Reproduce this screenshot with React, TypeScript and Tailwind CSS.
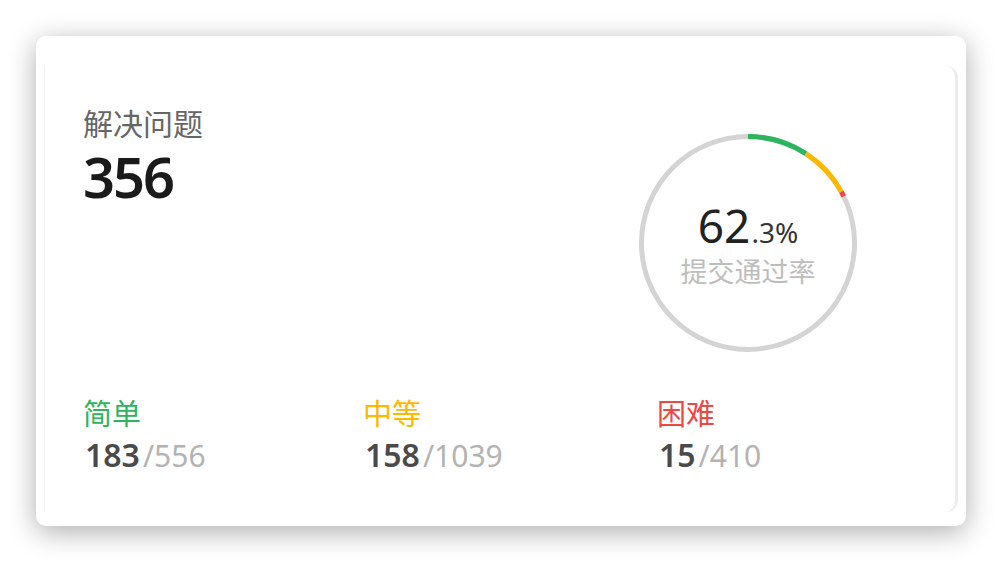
import React from "react";

const stats = [
  { label: "简单", solved: 183, total: 556, color: "#2db55d", labelClass: "text-[#2db55d]" },
  { label: "中等", solved: 158, total: 1039, color: "#ffb800", labelClass: "text-[#ffb800]" },
  { label: "困难", solved: 15, total: 410, color: "#ef4743", labelClass: "text-[#ef4743]" },
];

const RING_R = 106.5;
const CIRC = 2 * Math.PI * RING_R;

const ProgressRing = () => {
  const sum = stats.reduce((a, s) => a + s.total, 0);
  let offset = 0;
  return (
    <div className="relative w-[222px] h-[222px]">
      <svg width="222" height="222" viewBox="0 0 222 222" className="-rotate-90">
        <circle cx="111" cy="111" r={RING_R} fill="none" stroke="#d4d4d4" strokeWidth="5" />
        {stats.map((s) => {
          const len = (s.solved / sum) * CIRC;
          const el = (
            <circle
              key={s.label}
              cx="111"
              cy="111"
              r={RING_R}
              fill="none"
              stroke={s.color}
              strokeWidth="5"
              strokeDasharray={`${len} ${CIRC - len}`}
              strokeDashoffset={-offset}
            />
          );
          offset += len;
          return el;
        })}
      </svg>
      <div className="absolute inset-0 flex flex-col items-center pt-[70px]">
        <div className="leading-none text-[#222]">
          <span className="text-[46px]">62</span>
          <span className="ml-[1px] text-[28px] text-[#333]">.3%</span>
        </div>
        <div className="mt-[10px] text-[27px] leading-none text-[#bdbdbd]">提交通过率</div>
      </div>
    </div>
  );
};

export default function App() {
  return (
    <div className="w-full h-[562px] bg-white pt-[36px] pl-[36px] font-['Noto_Sans','Noto_Sans_CJK_SC',sans-serif]">
      <div className="w-[930px] h-[490px] rounded-[10px] bg-white shadow-[0_6px_28px_rgba(0,0,0,0.32)] pt-[30px] px-[8px] pb-[14px]">
        <div className="h-full rounded-tr-[12px] rounded-br-[12px] border-r-[3px] border-r-[#ececec] border-l border-l-[#f4f4f4] pl-[38px] pr-[96px] flex flex-col">
          <div className="flex justify-between items-start">
            <div className="pt-[41px]">
              <div className="text-[30px] leading-[34px] text-[#666]">解决问题</div>
              <div className="mt-[3px] text-[56px] leading-[64px] font-semibold tracking-[-2px] text-[#1a1a1a]">356</div>
            </div>
            <div className="mt-[66px]">
              <ProgressRing />
            </div>
          </div>
          <div className="mt-[43px] grid grid-cols-[280px_294px_auto]">
            {stats.map((s) => (
              <div key={s.label} className="flex flex-col">
                <div className={`text-[29px] leading-[34px] ${s.labelClass}`}>{s.label}</div>
                <div className="mt-[8px] pl-[2px] leading-none">
                  <span className="text-[32px] font-semibold text-[#4a4a4a]">{s.solved}</span>
                  <span className="ml-[3px] text-[30px] text-[#b3b3b3]">/{s.total}</span>
                </div>
              </div>
            ))}
          </div>
        </div>
      </div>
    </div>
  );
}
